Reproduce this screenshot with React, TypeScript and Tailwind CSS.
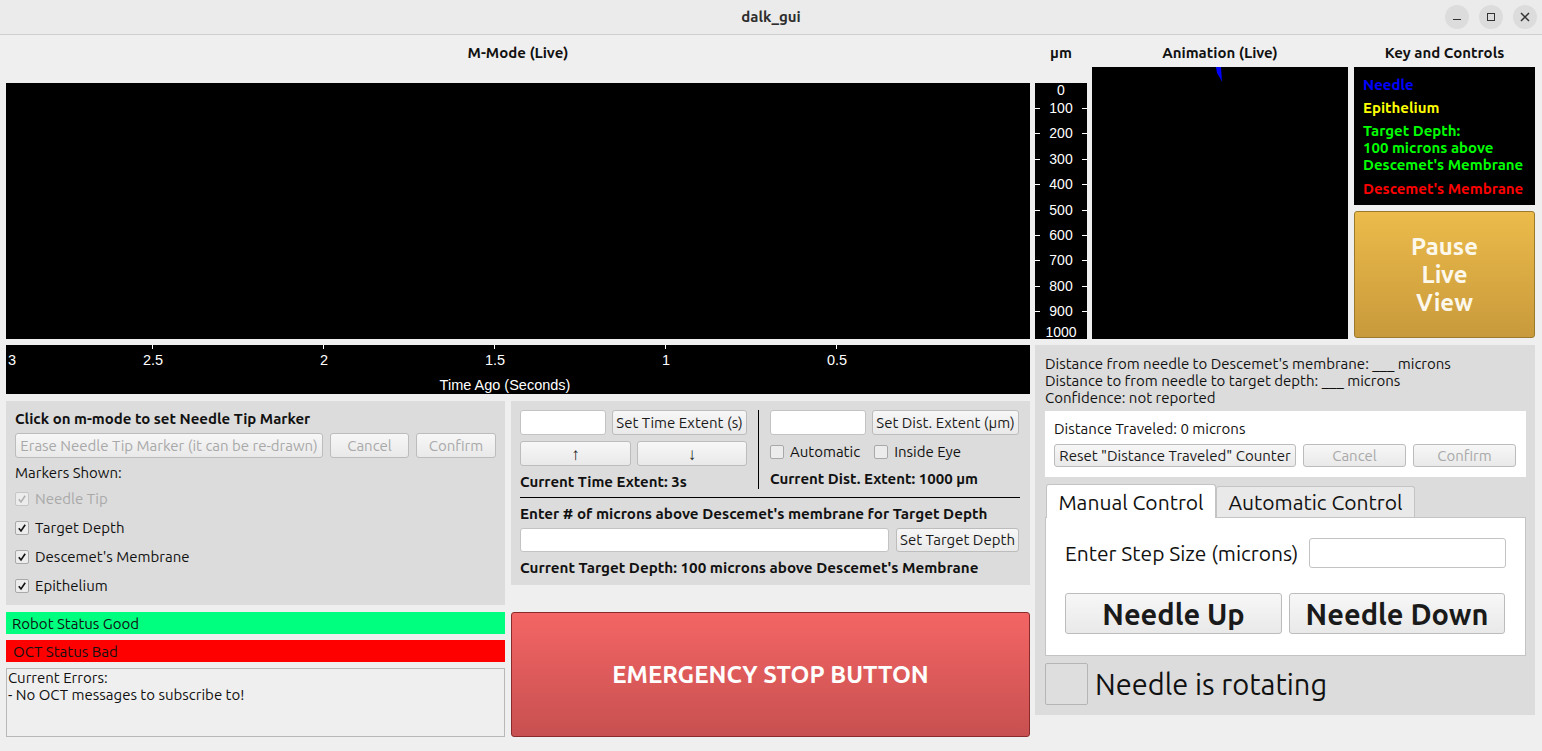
import React from "react";

const ui = "font-['Ubuntu','Noto_Sans',sans-serif]";
const axisFont = "font-['Liberation_Sans',Arial,sans-serif]";

const Btn = ({
  children,
  className = "",
  disabled = false,
}: {
  children: React.ReactNode;
  className?: string;
  disabled?: boolean;
}) => (
  <button
    className={`flex items-center justify-center rounded-[3px] border border-[#bcbcbc] bg-gradient-to-b from-[#f7f7f7] to-[#e9e9e9] whitespace-nowrap ${
      disabled ? "text-[#a9a9a9]" : "text-[#1a1a1a]"
    } ${className}`}
  >
    {children}
  </button>
);

const Input = ({ className = "" }: { className?: string }) => (
  <div className={`rounded-[3px] border border-[#c3c3c3] bg-white ${className}`}></div>
);

const CheckBox = ({
  label,
  checked = false,
  disabled = false,
}: {
  label: string;
  checked?: boolean;
  disabled?: boolean;
}) => (
  <div className="flex items-center gap-[6px] leading-[18px]">
    <div
      className={`flex h-[14px] w-[14px] items-center justify-center rounded-[2px] border ${
        disabled ? "border-[#c6c6c6]" : "border-[#a9a9a9]"
      } bg-[#ececec]`}
    >
      {checked && (
        <svg width="10" height="10" viewBox="0 0 10 10">
          <path
            d="M1.8 5.2 L4 8 L8.2 1.8"
            fill="none"
            stroke={disabled ? "#b0b0b0" : "#111"}
            strokeWidth="1.6"
          />
        </svg>
      )}
    </div>
    <span className={disabled ? "text-[#a9a9a9]" : "text-[#111]"}>{label}</span>
  </div>
);

const timeTicks = [
  { x: 146, v: "2.5" },
  { x: 317, v: "2" },
  { x: 488, v: "1.5" },
  { x: 659, v: "1" },
  { x: 830, v: "0.5" },
];

const depthTicks = [100, 200, 300, 400, 500, 600, 700, 800, 900];

export default function App() {
  return (
    <div className={`${ui} h-[751px] w-[1542px] overflow-hidden bg-[#efefef] text-[15px] leading-[18px] text-[#111]`}>
      {/* title bar */}
      <div className="relative flex h-[35px] items-center justify-center border-b border-[#cfcfcf] bg-[#ebebeb]">
        <span className="text-[15px] font-bold text-[#2e2e2e]">dalk_gui</span>
        <div className="absolute right-[5px] top-[5px] flex gap-[10px]">
          <div className="flex h-[24px] w-[24px] items-center justify-center rounded-full bg-[#dcdcdc]">
            <div className="mt-[5px] h-[1.5px] w-[8px] bg-[#333]"></div>
          </div>
          <div className="flex h-[24px] w-[24px] items-center justify-center rounded-full bg-[#dcdcdc]">
            <div className="h-[8px] w-[8px] border-[1.5px] border-[#333]"></div>
          </div>
          <div className="flex h-[24px] w-[24px] items-center justify-center rounded-full bg-[#dcdcdc]">
            <svg width="10" height="10" viewBox="0 0 10 10">
              <path d="M1 1 L9 9 M9 1 L1 9" stroke="#333" strokeWidth="1.5" />
            </svg>
          </div>
        </div>
      </div>

      <div className="flex gap-[5px] pl-[6px]">
        {/* left side */}
        <div className="flex w-[1024px] flex-col">
          <div className="flex h-[32px] items-center justify-center pt-[4px] font-bold">M-Mode (Live)</div>
          <div className="mt-[16px] h-[256px] bg-black"></div>
          <div className={`${axisFont} relative mt-[6px] h-[49px] bg-black text-[14.5px] text-white`}>
            <span className="absolute left-[2px] top-[6px]">3</span>
            {timeTicks.map((t) => (
              <React.Fragment key={t.v}>
                <div className="absolute top-0 h-[4px] w-px bg-white" style={{ left: t.x }}></div>
                <span className="absolute top-[6px] -translate-x-1/2" style={{ left: t.x + 1 }}>
                  {t.v}
                </span>
              </React.Fragment>
            ))}
            <span className="absolute bottom-0 left-[499px] -translate-x-1/2 whitespace-nowrap">Time Ago (Seconds)</span>
          </div>

          <div className="mt-[7px] flex gap-[6px]">
            {/* marker panel + status */}
            <div className="flex w-[499px] flex-col">
              <div className="flex h-[204px] flex-col bg-[#dcdcdc] px-[9px] pt-[9px]">
                <div className="font-bold">Click on m-mode to set Needle Tip Marker</div>
                <div className="mt-[5px] flex gap-[7px]">
                  <Btn disabled className="h-[25px] w-[308px]">Erase Needle Tip Marker (it can be re-drawn)</Btn>
                  <Btn disabled className="h-[25px] w-[79px]">Cancel</Btn>
                  <Btn disabled className="h-[25px] w-[80px]">Confirm</Btn>
                </div>
                <div className="mt-[6px]">Markers Shown:</div>
                <div className="mt-[8px] flex flex-col gap-[11px]">
                  <CheckBox label="Needle Tip" checked disabled />
                  <CheckBox label="Target Depth" checked />
                  <CheckBox label="Descemet's Membrane" checked />
                  <CheckBox label="Epithelium" checked />
                </div>
              </div>
              <div className="mt-[7px] flex h-[22px] items-center bg-[#00ff7f] px-[6px] pt-px">Robot Status Good</div>
              <div className="mt-[6px] flex h-[22px] items-center bg-[#ff0000] px-[7px] pt-px">OCT Status Bad</div>
              <div className="mt-[6px] h-[69px] border border-[#b8b8b8] bg-[#efefef] px-[1px] leading-[17px]">
                <div>Current Errors:</div>
                <div>- No OCT messages to subscribe to!</div>
              </div>
            </div>

            {/* extent panel + emergency */}
            <div className="flex w-[519px] flex-col">
              <div className="flex h-[184px] flex-col bg-[#dcdcdc] px-[9px] pt-[9px]">
                <div className="flex">
                  <div className="flex w-[227px] flex-col">
                    <div className="flex gap-[6px]">
                      <Input className="h-[25px] w-[86px]" />
                      <Btn className="h-[25px] w-[135px]">Set Time Extent (s)</Btn>
                    </div>
                    <div className="mt-[6px] flex gap-[6px]">
                      <Btn className="h-[25px] w-[111px] text-[17px] font-bold">↑</Btn>
                      <Btn className="h-[25px] w-[110px] text-[17px] font-bold">↓</Btn>
                    </div>
                    <div className="mt-[7px] font-bold">Current Time Extent: 3s</div>
                  </div>
                  <div className="ml-[11px] h-[79px] w-px bg-black"></div>
                  <div className="ml-[11px] flex flex-col">
                    <div className="flex gap-[6px]">
                      <Input className="h-[25px] w-[96px]" />
                      <Btn className="h-[25px] w-[147px]">Set Dist. Extent (µm)</Btn>
                    </div>
                    <div className="mt-[8px] flex gap-[14px]">
                      <CheckBox label="Automatic" />
                      <CheckBox label="Inside Eye" />
                    </div>
                    <div className="mt-[9px] font-bold">Current Dist. Extent: 1000 µm</div>
                  </div>
                </div>
                <div className="mt-[6px] h-px w-[500px] bg-black"></div>
                <div className="mt-[7px] text-[15.2px] font-bold">Enter # of microns above Descemet's membrane for Target Depth</div>
                <div className="mt-[5px] flex gap-[7px]">
                  <Input className="h-[24px] w-[369px]" />
                  <Btn className="h-[24px] w-[123px]">Set Target Depth</Btn>
                </div>
                <div className="mt-[7px] text-[15.2px] font-bold">Current Target Depth: 100 microns above Descemet's Membrane</div>
              </div>
              <button className="mt-[27px] flex h-[125px] items-center justify-center rounded-[3px] border border-[#8a2a2a] bg-gradient-to-b from-[#f46565] to-[#c85050] pt-px text-[24px] font-bold text-white">
                EMERGENCY STOP BUTTON
              </button>
            </div>
          </div>
        </div>

        {/* right side */}
        <div className="flex w-[500px] flex-col">
          <div className="flex gap-[5px]">
            <div className="flex w-[52px] flex-col">
              <div className="flex h-[32px] items-center justify-center pt-[4px] font-bold">µm</div>
              <div className={`${axisFont} relative mt-[16px] h-[256px] bg-black text-[14px] text-white`}>
                <span className="absolute left-1/2 top-[-1px] -translate-x-1/2 leading-[16px]">0</span>
                {depthTicks.map((d, i) => (
                  <React.Fragment key={d}>
                    <div className="absolute left-0 h-px w-[5px] bg-white" style={{ top: 25 + i * 25.4 }}></div>
                    <div className="absolute right-0 h-px w-[5px] bg-white" style={{ top: 25 + i * 25.4 }}></div>
                    <span className="absolute left-1/2 -translate-x-1/2 leading-[16px]" style={{ top: 17 + i * 25.4 }}>
                      {d}
                    </span>
                  </React.Fragment>
                ))}
                <span className="absolute bottom-[-1px] left-1/2 -translate-x-1/2 leading-[16px]">1000</span>
              </div>
            </div>

            <div className="flex w-[256px] flex-col">
              <div className="flex h-[32px] items-center justify-center pt-[4px] font-bold">Animation (Live)</div>
              <div className="relative h-[272px] bg-black">
                <svg className="absolute left-[124px] top-0" width="7" height="15" viewBox="0 0 7 15">
                  <polygon points="0,0 5,0 6,15 4,11 1,6" fill="#0000ff" />
                </svg>
              </div>
            </div>

            <div className="ml-[1px] flex w-[181px] flex-col">
              <div className="flex h-[32px] items-center justify-center pt-[4px] font-bold">Key and Controls</div>
              <div className="flex h-[138px] flex-col bg-black px-[9px] pt-[9px] font-bold leading-[17px]">
                <div className="text-[#0000ff]">Needle</div>
                <div className="mt-[6px] text-[#ffff00]">Epithelium</div>
                <div className="mt-[6px] text-[#00ff00]">
                  Target Depth:
                  <br />
                  100 microns above
                  <br />
                  Descemet's Membrane
                </div>
                <div className="mt-[7px] text-[#ff0000]">Descemet's Membrane</div>
              </div>
              <button className="mt-[6px] flex h-[127px] flex-col items-center justify-center rounded-[3px] border border-[#9c7a2c] bg-gradient-to-b from-[#ebbb4b] to-[#c99a3b] text-[24px] font-bold leading-[28px] text-[#fdf8ec]">
                <span>Pause</span>
                <span>Live</span>
                <span>View</span>
              </button>
            </div>
          </div>

          {/* lower right panel */}
          <div className="mt-[6px] flex h-[370px] flex-col bg-[#dcdcdc] px-[10px] pt-[10px]">
            <div className="leading-[17px]">
              <div>Distance from needle to Descemet's membrane: ___ microns</div>
              <div>Distance to from needle to target depth: ___ microns</div>
              <div>Confidence: not reported</div>
            </div>
            <div className="mt-[5px] mr-[-1px] flex h-[66px] flex-col bg-white px-[9px] pt-[9px]">
              <div>Distance Traveled: 0 microns</div>
              <div className="mt-[6px] flex gap-[7px]">
                <Btn className="h-[23px] w-[242px]">Reset "Distance Traveled" Counter</Btn>
                <Btn disabled className="h-[23px] w-[103px]">Cancel</Btn>
                <Btn disabled className="h-[23px] w-[103px]">Confirm</Btn>
              </div>
            </div>

            <div className="mt-[7px] flex items-end pl-[1px]">
              <div className="z-10 mb-[-1px] flex h-[34px] w-[170px] items-center justify-center rounded-t-[3px] border border-b-0 border-[#c4c4c4] bg-white text-[21px] leading-[24px]">
                Manual Control
              </div>
              <div className="flex h-[31px] w-[199px] items-center justify-center rounded-t-[3px] border border-b-0 border-[#c4c4c4] bg-[#e9e9e9] text-[21px] leading-[24px]">
                Automatic Control
              </div>
            </div>
            <div className="mr-[-1px] flex h-[139px] flex-col border border-[#c4c4c4] bg-white px-[19px] pt-[20px]">
              <div className="flex items-center justify-between">
                <span className="text-[21px] leading-[24px]">Enter Step Size (microns)</span>
                <Input className="h-[30px] w-[197px]" />
              </div>
              <div className="mt-[25px] flex gap-[7px]">
                <Btn className="h-[41px] w-[217px] text-[29px] font-bold">Needle Up</Btn>
                <Btn className="h-[41px] w-[216px] text-[29px] font-bold">Needle Down</Btn>
              </div>
            </div>
            <div className="mt-[7px] flex items-center gap-[7px]">
              <div className="h-[42px] w-[43px] rounded-[2px] border border-[#b5b5b5] bg-[#dedede]"></div>
              <span className="text-[29px] leading-[34px]">Needle is rotating</span>
            </div>
          </div>
        </div>
      </div>
    </div>
  );
}
